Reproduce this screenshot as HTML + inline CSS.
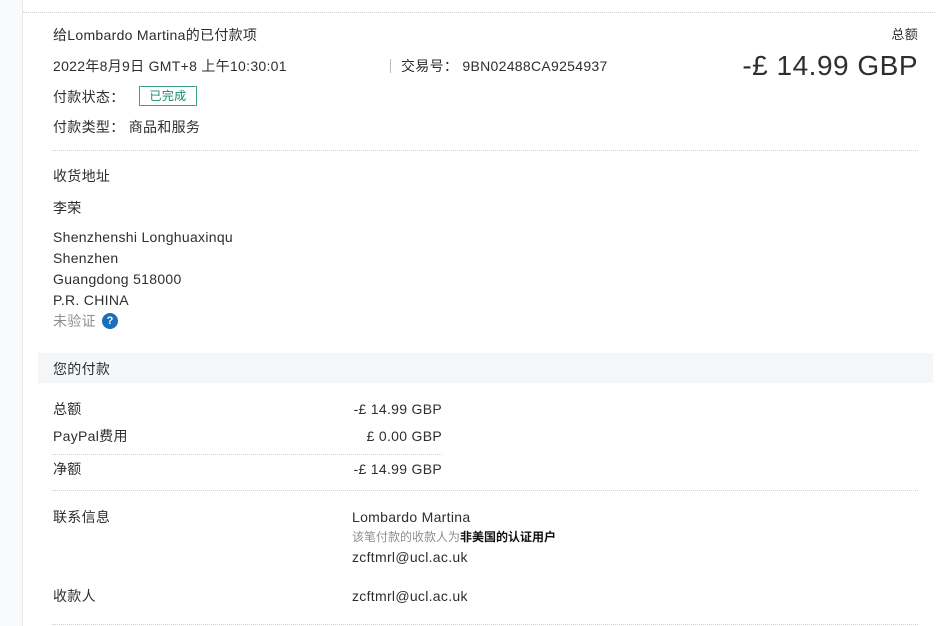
<!DOCTYPE html>
<html><head><meta charset="utf-8"><style>
body{margin:0;width:947px;height:626px;overflow:hidden;background:#fff;font-family:"Liberation Sans","Noto Sans CJK SC",sans-serif;color:#2c2e2f;font-size:14px;position:relative}
.a{position:absolute;white-space:nowrap;line-height:18px;letter-spacing:0.3px}
.hr{position:absolute;height:0;border-top:1px dotted #cbd2d6}
.r{text-align:right}
</style></head><body>
<div style="position:absolute;left:0;top:0;width:22px;height:626px;background:#f9fafb;border-right:1px solid #e6e8ea"></div>
<div class="hr" style="left:23px;top:12px;width:912px"></div>
<div class="a" style="left:53px;top:26px">给Lombardo Martina的已付款项</div>
<div class="a" style="left:53px;top:57px">2022年8月9日 GMT+8 上午10:30:01</div>
<div style="position:absolute;left:390px;top:59px;width:1px;height:14px;background:#bbb"></div>
<div class="a" style="left:401px;top:57px">交易号： 9BN02488CA9254937</div>
<div class="a r" style="right:29px;top:26px;font-size:13px;font-weight:normal">总额</div>
<div class="a r" style="right:29px;top:50px;font-size:28px;line-height:32px;letter-spacing:0.5px">-£ 14.99 GBP</div>
<div class="a" style="left:53px;top:88px">付款状态：</div>
<div class="a" style="left:139px;top:86px;width:56px;height:18px;border:1px solid #3aa48a;color:#1a8a6e;font-size:12px;text-align:center;line-height:18px">已完成</div>
<div class="a" style="left:53px;top:118px">付款类型： 商品和服务</div>
<div class="hr" style="left:52px;top:150px;width:866px"></div>
<div class="a" style="left:53px;top:167px">收货地址</div>
<div class="a" style="left:53px;top:199px">李荣</div>
<div class="a" style="left:53px;top:228px">Shenzhenshi Longhuaxinqu</div>
<div class="a" style="left:53px;top:249px">Shenzhen</div>
<div class="a" style="left:53px;top:270px">Guangdong 518000</div>
<div class="a" style="left:53px;top:291px">P.R. CHINA</div>
<div class="a" style="left:53px;top:312px;color:#8f8f8f">未验证</div>
<div class="a" style="left:102px;top:313px;width:16px;height:16px;border-radius:50%;background:#1a6fb8;color:#fff;font-size:11px;font-weight:bold;text-align:center;line-height:16px;letter-spacing:0">?</div>
<div style="position:absolute;left:38px;top:353px;width:895px;height:30px;background:#f5f6f8"></div>
<div class="a" style="left:53px;top:360px">您的付款</div>
<div class="a" style="left:53px;top:400px">总额</div>
<div class="a r" style="right:505px;top:400px">-£ 14.99 GBP</div>
<div class="a" style="left:53px;top:427px">PayPal费用</div>
<div class="a r" style="right:505px;top:427px">£ 0.00 GBP</div>
<div class="hr" style="left:52px;top:454px;width:390px"></div>
<div class="a" style="left:53px;top:460px">净额</div>
<div class="a r" style="right:505px;top:460px">-£ 14.99 GBP</div>
<div class="hr" style="left:52px;top:490px;width:866px"></div>
<div class="a" style="left:53px;top:508px">联系信息</div>
<div class="a" style="left:352px;top:508px">Lombardo Martina</div>
<div class="a" style="left:352px;top:528px;font-size:12px;color:#8f8f8f;letter-spacing:0">该笔付款的收款人为<b style="color:#111">非美国的认证用户</b></div>
<div class="a" style="left:352px;top:548px">zcftmrl@ucl.ac.uk</div>
<div class="a" style="left:53px;top:587px">收款人</div>
<div class="a" style="left:352px;top:587px">zcftmrl@ucl.ac.uk</div>
<div class="hr" style="left:52px;top:624px;width:866px"></div>
</body></html>
